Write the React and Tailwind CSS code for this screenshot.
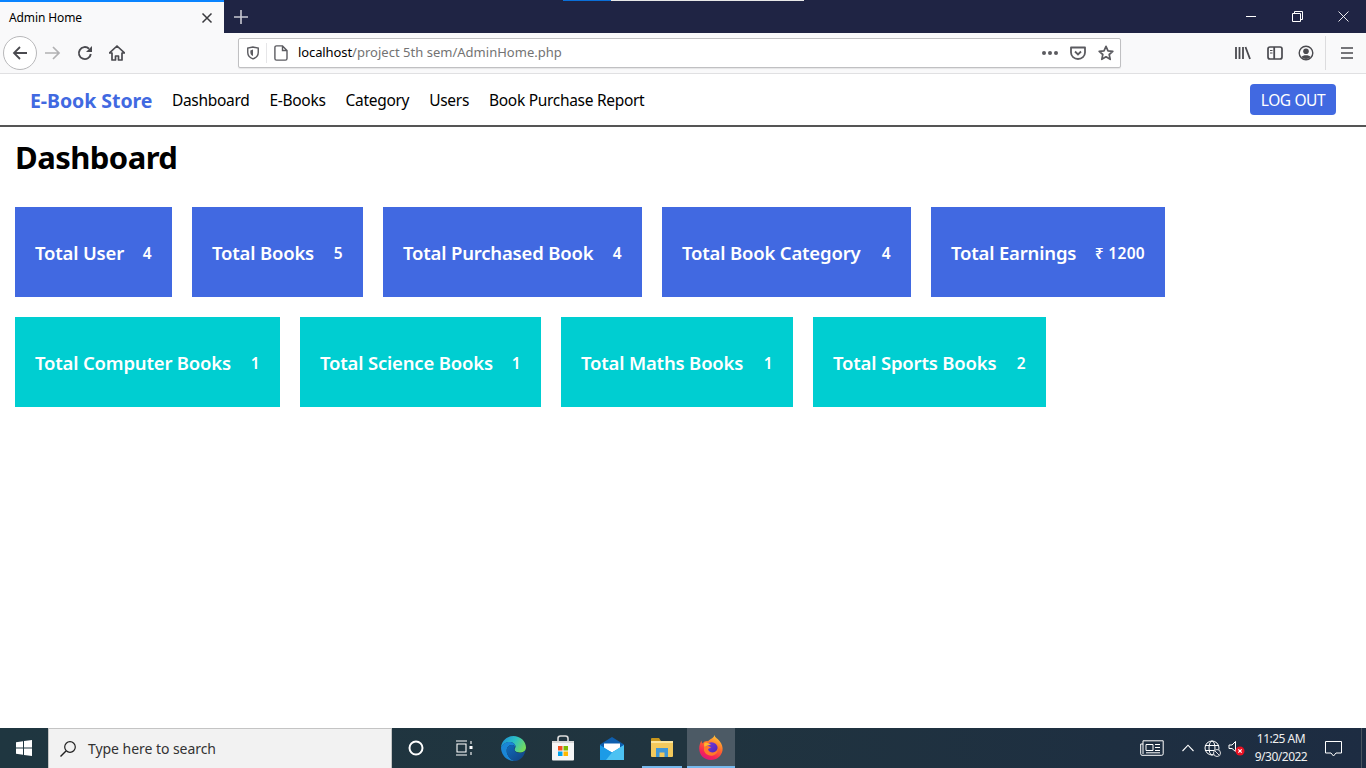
import React from "react";

const UI = { fontFamily: '"Noto Sans", "Open Sans", sans-serif' };

const blue = [
  ["Total User", "4", "w-[157px]"],
  ["Total Books", "5", "w-[171px]"],
  ["Total Purchased Book", "4", "w-[259px]"],
  ["Total Book Category", "4", "w-[249px]"],
  ["Total Earnings", "₹ 1200", "w-[234px]"],
];
const cyan = [
  ["Total Computer Books", "1", "w-[265px]"],
  ["Total Science Books", "1", "w-[241px]"],
  ["Total Maths Books", "1", "w-[232px]"],
  ["Total Sports Books", "2", "w-[233px]"],
];

function Card({ label, value, width, bg }) {
  return (
    <div className={`${width} ${bg} h-[90px] px-5 pt-[2px] flex items-center justify-between text-white`}>
      <span className="text-[18.5px] font-semibold tracking-[-0.18px] whitespace-nowrap">{label}</span>
      <span className="text-[15.5px] font-semibold tracking-[0.3px] mt-px whitespace-nowrap">{value}</span>
    </div>
  );
}

const S = ({ w = 16, h = 16, vb = "0 0 16 16", children, className = "" }) => (
  <svg width={w} height={h} viewBox={vb} fill="none" className={`shrink-0 ${className}`}>{children}</svg>
);

function Windows() {
  return (
    <S w={16} h={16}>
      <path d="M0 2.200 7 1.200V7.500H0ZM8 1 16 0V7.500H8ZM0 8.500H7V14.800L0 13.800ZM8 8.500H16V16L8 15Z" fill="#fff" />
    </S>
  );
}

function Edge() {
  return (
    <svg width="25" height="25" viewBox="0 0 25 25" className="shrink-0">
      <defs>
        <linearGradient id="eg1" x1="0" y1="0.2" x2="1" y2="0.6"><stop offset="0" stopColor="#1b8fd8" /><stop offset="0.5" stopColor="#2cc0c4" /><stop offset="1" stopColor="#74dc5c" /></linearGradient>
        <linearGradient id="eg2" x1="0" y1="0" x2="1" y2="1"><stop offset="0" stopColor="#0f6cbd" /><stop offset="1" stopColor="#123f7d" /></linearGradient>
      </defs>
      <path d="M12.500 0C19 0 25 5 25 11.500c0 3-2.500 5-6 5-3 0-5.500-1-5.500-3 0-1 1-1.500 1-3 0-2.500-3-4.500-6-4.500C4.500 6 1.500 8.500 0 11.500.5 5 6 0 12.500 0Z" fill="url(#eg1)" />
      <path d="M0 11.500C1.500 8 5 6 8.500 6c3 0 6 2 6 4.500-1.500-1.500-4-2-6-1C5.500 11 5 15 6.500 18.500 8 22 11 24.500 14 25 6.500 25.500 0 19.500 0 11.500Z" fill="#1a86d6" />
      <path d="M8.500 9.500c2-1 4.500-.5 6 1-1 1-1.500 2-1 3.500 1 2.500 4.500 3.500 7.500 2.500 1.500-.5 3-1.500 3.500-2.500-.5 5-5 11-10.500 11-3 0-6-3-7.500-6.500C5 15 5.500 11 8.500 9.500Z" fill="url(#eg2)" />
    </svg>
  );
}

function Store() {
  return (
    <svg width="24" height="26" viewBox="0 0 24 26" className="shrink-0">
      <path d="M7 7V3.500C7 2 8 1 9.500 1h5C16 1 17 2 17 3.500V7" fill="none" stroke="#dcdcdc" strokeWidth="1.600" />
      <path d="M1 6h22v18.500a1 1 0 0 1-1 1H2a1 1 0 0 1-1-1Z" fill="#f6f6f6" />
      <path d="M1 6h22v2H1Z" fill="#d8d8d8" />
      <rect x="7" y="11" width="4.500" height="4.500" fill="#f25022" />
      <rect x="12.500" y="11" width="4.500" height="4.500" fill="#7fba00" />
      <rect x="7" y="16.500" width="4.500" height="4.500" fill="#00a4ef" />
      <rect x="12.500" y="16.500" width="4.500" height="4.500" fill="#ffb900" />
    </svg>
  );
}

function Mail() {
  return (
    <svg width="24" height="23" viewBox="0 0 24 23" className="shrink-0">
      <path d="M0 7.500 12 0l12 7.500V23H0Z" fill="#0f5fae" />
      <path d="M4 6.500h16v5L12 15.500 4 11.500Z" fill="#fff" />
      <path d="M0 8l12 7.500L24 8v15H0Z" fill="#1c9be6" />
      <path d="M12 15.500 24 8v15H6Z" fill="#4cc2f2" />
    </svg>
  );
}

function Folder() {
  return (
    <svg width="22" height="19" viewBox="0 0 22 19" className="shrink-0">
      <path d="M0 1a1 1 0 0 1 1-1h7l2 3H0Z" fill="#c8961c" />
      <path d="M0 3h21a1 1 0 0 1 1 1v14a1 1 0 0 1-1 1H1a1 1 0 0 1-1-1Z" fill="#f3c95c" />
      <path d="M0 3h22v2H0Z" fill="#fbe59c" />
      <path d="M5 10h12v9h-3.500v-4.500h-5V19H5Z" fill="#3f97d8" />
    </svg>
  );
}

function Firefox() {
  return (
    <svg width="24" height="25" viewBox="0 0 24 25" className="shrink-0">
      <defs>
        <linearGradient id="ff1" x1="0.8" y1="0" x2="0.3" y2="1"><stop offset="0" stopColor="#ffd23a" /><stop offset="0.45" stopColor="#ff6a2a" /><stop offset="0.8" stopColor="#f5225a" /><stop offset="1" stopColor="#d91a7a" /></linearGradient>
        <linearGradient id="ff2" x1="0" y1="0" x2="1" y2="1"><stop offset="0" stopColor="#7a3ee0" /><stop offset="1" stopColor="#4a22b5" /></linearGradient>
      </defs>
      <path d="M15.500 0c.3 2.500 3 3.500 5 6 2.500 3 3.500 6.500 3 9.500C22.500 21 18 25 12 25 5 25 .2 20 .2 13.500c0-3 1-6 2.300-8 0 1.500.5 2.500 1.300 3C5 6.500 7 5.800 9 6.200 11 4 15 3 15.500 0Z" fill="url(#ff1)" />
      <circle cx="12.500" cy="13.500" r="6.200" fill="url(#ff2)" />
      <path d="M5 12c2-1.500 5-1.500 7 .5-1 .5-2.500 1-3 2 1 2.500 4 3.500 6.500 2.500 2-.8 3-2.500 3.200-4.500 1 3.500-1 7-4.700 8C10 21.500 6 19 5 15.500Z" fill="#ff7a2a" />
      <path d="M5.500 7.500c2 0 5 .5 6.500 2.500-2 0-4 .5-6.500 2-.6-1.500-.6-3 0-4.500Z" fill="#ffb52e" />
    </svg>
  );
}

function Chrome() {
  const ic = "#4a4a4f";
  return (
    <>
      <div className="h-[33px] bg-[#1f2444] flex relative shrink-0">
        <div className="absolute top-0 left-[563px] w-[48px] h-px bg-[#0a6fd8]" />
        <div className="absolute top-0 left-[611px] w-[193px] h-px bg-[#e8e8e8]" />
        <div className="w-[224px] bg-[#f9f9fa] border-t-2 border-[#0a84ff] flex items-center pl-[9px] pr-[10px] justify-between">
          <span className="text-[12px] text-black tracking-[-0.1px]">Admin Home</span>
          <S w={14} h={14} vb="0 0 14 14"><path d="M2.500 2.500l9 9M11.500 2.500l-9 9" stroke="#3a3a3e" strokeWidth="1.500" /></S>
        </div>
        <div className="w-[34px] flex items-center justify-center">
          <S w={14} h={14} vb="0 0 14 14"><path d="M7 0v14M0 7h14" stroke="#c8c9d2" strokeWidth="1.600" /></S>
        </div>
        <div className="ml-auto flex h-full">
          <div className="w-[46px] flex items-center justify-center"><div className="w-[10px] h-px bg-white" /></div>
          <div className="w-[46px] flex items-center justify-center">
            <S w={11} h={11} vb="0 0 11 11"><path d="M.5 2.500h8v8h-8ZM2.500 2.500v-2h8v8h-2" stroke="#fff" /></S>
          </div>
          <div className="w-[46px] flex items-center justify-center">
            <S w={11} h={11} vb="0 0 11 11"><path d="M.5.500l10 10M10.500.500l-10 10" stroke="#fff" strokeWidth=".9" /></S>
          </div>
        </div>
      </div>
      <div className="h-[41px] bg-[#f9f9fa] border-b border-[#e0e0e2] flex items-center shrink-0">
        <div className="ml-[3px] w-[34px] h-[34px] rounded-full border border-[#b8b8ba] bg-white flex items-center justify-center">
          <S><path d="M15 8H2M8 2 2 8l6 6" stroke={ic} strokeWidth="1.800" /></S>
        </div>
        <div className="ml-[8px]">
          <S><path d="M0 8h14M8 2l6 6-6 6" stroke="#b1b1b3" strokeWidth="1.700" /></S>
        </div>
        <div className="ml-[16px]">
          <S><path d="M13.800 9A6 6 0 1 1 12 3.700" stroke={ic} strokeWidth="1.900" /><path d="M15 1v6H9Z" fill={ic} /></S>
        </div>
        <div className="ml-[16px]">
          <S><path d="M8 1 .5 8H3v7h3.500v-4h3v4H13V8h2.500Z" stroke={ic} strokeWidth="1.700" strokeLinejoin="round" /></S>
        </div>
        <div className="ml-[113px] w-[883px] h-[30px] bg-white border border-[#c0c0c2] rounded-[2px] flex items-center shadow-[0_1px_1px_rgba(0,0,0,0.08)]">
          <div className="w-[28px] h-[20px] border-r border-[#e6e6e8] flex items-center justify-center">
            <S w={14} h={14}><path d="M8 1.200 2 2.500v5c0 3.500 2.500 6 6 7.300 3.500-1.300 6-3.800 6-7.300v-5Z" stroke="#5b5b60" strokeWidth="1.600" /><path d="M8 4 5 5v2.500c0 2 1.200 3.300 3 4Z" fill="#5b5b60" /></S>
          </div>
          <div className="ml-[7px]">
            <S w={14} h={16} vb="0 0 14 16"><path d="M2.500.9H8.500L13 5.500V13.500a1.600 1.600 0 0 1-1.600 1.600H2.500a1.600 1.600 0 0 1-1.600-1.600V2.500A1.600 1.600 0 0 1 2.500.9ZM8.500 1V5.500H13" stroke="#5b5b60" strokeWidth="1.400" /></S>
          </div>
          <span className="ml-[10px] text-[13px] tracking-[0.02px] text-[#737373] whitespace-nowrap"><span className="text-black tracking-[-0.1px]">localhost</span>/project 5th sem/AdminHome.php</span>
          <div className="ml-auto flex items-center">
            <div className="flex gap-[2px]">
              <div className="w-[4px] h-[4px] rounded-full bg-[#5b5b60]" /><div className="w-[4px] h-[4px] rounded-full bg-[#5b5b60]" /><div className="w-[4px] h-[4px] rounded-full bg-[#5b5b60]" />
            </div>
            <div className="ml-[12px]">
              <S><path d="M1 2.500h14v5a7 6.500 0 0 1-14 0Z" stroke="#5b5b60" strokeWidth="1.800" strokeLinejoin="round" /><path d="M5 6.500l3 3 3-3" stroke="#5b5b60" strokeWidth="1.800" /></S>
            </div>
            <div className="ml-[12px] mr-[6px]">
              <S><path d="M8 1.300l2 4.500 4.800.5-3.600 3.200 1 4.800L8 11.800l-4.200 2.500 1-4.800L1.200 6.300 6 5.800Z" stroke="#5b5b60" strokeWidth="1.700" strokeLinejoin="round" /></S>
            </div>
          </div>
        </div>
        <div className="ml-auto flex items-center h-full">
          <S className="mr-[16px]"><path d="M1 2v12M4.500 2v12M8 2v12M10.500 2l4.500 12" stroke={ic} strokeWidth="1.800" /></S>
          <S className="mr-[15px]"><rect x="1" y="2" width="14" height="12" rx="2" stroke={ic} strokeWidth="1.700" /><path d="M7.200 2v12" stroke={ic} strokeWidth="1.800" /><path d="M3 5.500h2.500M3 8h2.500" stroke={ic} strokeWidth="1.200" /></S>
          <S className="mr-[11px]"><circle cx="8" cy="8" r="6.800" stroke={ic} strokeWidth="1.400" /><circle cx="8" cy="6.300" r="2.800" fill={ic} /><path d="M3.500 12c1-2.500 8-2.500 9 0-2 2.500-7 2.500-9 0Z" fill={ic} /></S>
          <div className="w-px h-[34px] bg-[#dcdcde] mr-[15px]" />
          <S w={12} h={12} vb="0 0 12 12" className="mr-[13px]"><path d="M0 1h12M0 6h12M0 11h12" stroke={ic} strokeWidth="1.600" /></S>
        </div>
      </div>
    </>
  );
}

function Taskbar() {
  return (
    <div className="h-10 shrink-0 flex items-stretch bg-gradient-to-r from-[#1f3640] via-[#20343f] to-[#1d2c42] text-white">
      <div className="w-[48px] flex items-center justify-center"><Windows /></div>
      <div className="w-[344px] bg-[#f2f2f2] border border-[#c4c4c4] border-b-0 flex items-center pl-[10px]">
        <S w={18} h={18} vb="0 0 18 18"><circle cx="11" cy="7" r="5.300" stroke="#222" strokeWidth="1.200" /><path d="M7 11 1.500 16.500" stroke="#222" strokeWidth="1.400" /></S>
        <span className="ml-[11px] text-[14px] tracking-[-0.05px] text-[#333]">Type here to search</span>
      </div>
      <div className="flex items-stretch">
        <div className="w-[48px] flex items-center justify-center">
          <S w={16} h={16}><circle cx="8" cy="8" r="6.500" stroke="#fff" strokeWidth="2" /></S>
        </div>
        <div className="w-[48px] flex items-center justify-center">
          <S w={18} h={16} vb="0 0 18 16"><path d="M1 1h11M1 15h11M2 4h9v8H2ZM16 1v3M16 12v3" stroke="#fff" strokeWidth="1.100" /><rect x="14.500" y="6" width="3" height="3" fill="#fff" /></S>
        </div>
        <div className="w-[50px] flex items-center justify-center"><Edge /></div>
        <div className="w-[49px] flex items-center justify-center"><Store /></div>
        <div className="w-[50px] flex items-center justify-center"><Mail /></div>
        <div className="w-[40px] mx-[5px] flex items-center justify-center border-b-2 border-[#76b9ed]"><Folder /></div>
        <div className="w-[48px] bg-[#4c5a65] flex items-center justify-center border-b-2 border-[#76b9ed]"><Firefox /></div>
      </div>
      <div className="ml-auto flex items-stretch">
        <div className="flex items-center mr-[18px]">
          <S w={24} h={16} vb="0 0 24 16"><path d="M3 .8h20.200v13a1.500 1.500 0 0 1-1.500 1.500H2A1.500 1.500 0 0 1 .7 13.800V4H3ZM3 4v10" stroke="#fff" strokeWidth="1" /><path d="M6 4.500h7v6H6ZM15 4.500h5M15 7.500h5M15 10.500h5M6 12.800h14" stroke="#fff" strokeWidth="1" /></S>
        </div>
        <div className="flex items-center mr-[10px]">
          <S w={12} h={8} vb="0 0 12 8"><path d="M.5 7 6 1.200 11.500 7" stroke="#fff" strokeWidth="1.100" /></S>
        </div>
        <div className="flex items-center mr-[7px]">
          <S w={17} h={17} vb="0 0 17 17"><circle cx="8" cy="8" r="7" stroke="#fff" strokeWidth="1" /><ellipse cx="8" cy="8" rx="3" ry="7" stroke="#fff" strokeWidth="1" /><path d="M1 5.500h14M1 10.500h14" stroke="#fff" strokeWidth="1" /><circle cx="13" cy="13" r="3.500" fill="#1d2c42" stroke="#ddd" /><path d="M11 11l4 4" stroke="#ddd" /></S>
        </div>
        <div className="flex items-center mr-[9px]">
          <S w={17} h={16} vb="0 0 17 16"><path d="M1 5h3l3.500-3.500v10L4 8.500H1Z" stroke="#fff" strokeWidth="1" /><circle cx="12" cy="11" r="4.500" fill="#e81123" /><path d="M10.300 9.300l3.400 3.400M13.700 9.300l-3.400 3.400" stroke="#fff" strokeWidth="1.200" /></S>
        </div>
        <div className="w-[54px] flex flex-col items-center justify-center text-[12px] leading-[18px] text-[#f0f0f0] tracking-[-0.5px]">
          <span>11:25 AM</span>
          <span>9/30/2022</span>
        </div>
        <div className="w-[53px] pr-[3px] flex items-center justify-center">
          <S w={17} h={17} vb="0 0 17 17"><path d="M.5 1.500h16v11.500h-5.500l-2.500 3-2.500-3H.5Z" stroke="#fff" strokeWidth="1" /></S>
        </div>
        <div className="w-[5px] border-l border-[#4a5560] bg-[#1d2c42]" />
      </div>
    </div>
  );
}

export default function App() {
  return (
    <div className="w-[1366px] h-[768px] overflow-hidden flex flex-col bg-white text-black" style={UI}>
      <Chrome />
      <nav className="h-[53px] shrink-0 border-b-2 border-[#555] flex items-center pl-[30px] pr-[30px] pt-[2px]">
        <span className="text-[19.5px] font-bold tracking-[-0.05px] text-[#4169e1] whitespace-nowrap">E-Book Store</span>
        <div className="ml-[19.5px] flex gap-5 text-[15.500px] tracking-[-0.3px] whitespace-nowrap">
          <span>Dashboard</span>
          <span>E-Books</span>
          <span>Category</span>
          <span>Users</span>
          <span>Book Purchase Report</span>
        </div>
        <div className="ml-auto -mt-[2px] w-[86px] h-[31px] pt-[2px] rounded-[4px] bg-[#4169e1] text-white text-[15.500px] tracking-[-0.4px] flex items-center justify-center">LOG OUT</div>
      </nav>
      <main className="flex-1 px-[15px]">
        <h1 className="text-[31px] font-bold tracking-[-0.55px] leading-[42px] mt-[9px]">Dashboard</h1>
        <div className="mt-[29px] flex gap-5">
          {blue.map(([l, v, w]) => <Card key={l} label={l} value={v} width={w} bg="bg-[#4169e1]" />)}
        </div>
        <div className="mt-5 flex gap-5">
          {cyan.map(([l, v, w]) => <Card key={l} label={l} value={v} width={w} bg="bg-[#00ced1]" />)}
        </div>
      </main>
      <Taskbar />
    </div>
  );
}
